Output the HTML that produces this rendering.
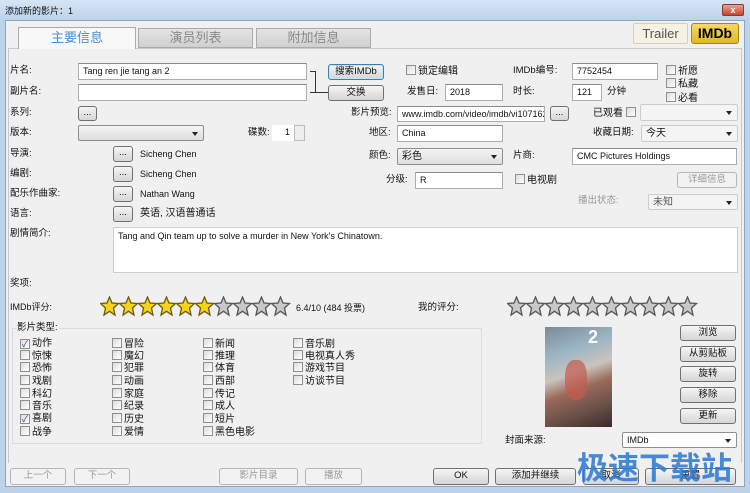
<!DOCTYPE html>
<html><head><meta charset="utf-8"><style>
*{box-sizing:border-box;margin:0;padding:0}
body{width:750px;height:493px;overflow:hidden;background:#bcd3ea;font-family:"Liberation Sans","Noto Sans CJK SC",sans-serif;font-size:9.5px;color:#111;position:relative}
.a{position:absolute;white-space:nowrap}
.l{position:absolute;white-space:nowrap;line-height:12px}
.in{position:absolute;background:#fff;border:1px solid #abadb3;border-top-color:#8a8c92;font-size:9px;padding:2px 4px;line-height:11px;white-space:nowrap;overflow:hidden}
.bt{position:absolute;border:1px solid #707070;border-radius:3px;background:linear-gradient(#f6f6f6,#e4e4e4 50%,#d6d6d6);text-align:center;font-size:9.5px;line-height:14px}
.bt.d{color:#999;border-color:#b5b5b5;background:#f2f2f2}
.dd{position:absolute;border:1px solid #8e8f8f;border-radius:2px;background:linear-gradient(#f4f4f4,#dedede);font-size:10px;padding:1px 4px;line-height:13px}
.dd:after{content:"";position:absolute;right:5px;top:6px;border:3px solid transparent;border-top:4px solid #222}
.ck{position:absolute;font-size:10px;line-height:12px;white-space:nowrap}
.ck i{display:inline-block;width:10px;height:10px;border:1px solid #8f8f8f;background:linear-gradient(135deg,#dcdcdc,#fff);vertical-align:-1px;margin-right:2px;font-style:normal;font-size:9px;line-height:8px;color:#2a4a9a;text-align:center}
</style></head><body>
<div class="a" style="left:0;top:0;width:750px;height:20px;background:linear-gradient(#d5e5f5,#bcd3ea)"></div>
<div class="a" style="left:5px;top:4px;font-size:9px">添加新的影片：1</div>
<div class="a" style="left:722px;top:4px;width:22px;height:12px;background:linear-gradient(#e8a393,#c7452e);border:1px solid #8a3a2a;border-radius:2px;color:#fff;font-size:9px;text-align:center;line-height:10px;font-weight:bold">x</div>
<div class="a" style="left:5px;top:20px;width:740px;height:467px;background:#f0f0f0;border:1px solid #8da6c0"></div>
<div class="a" style="left:8px;top:48px;width:734px;height:415px;border:1px solid #c8c8c8;border-bottom:none"></div>
<div class="a" style="left:18px;top:27px;width:118px;height:22px;background:#f8f8f8;border:1px solid #aaa;border-bottom:none;color:#4a8ed0;font-size:13px;text-align:center;line-height:20px">主要信息</div>
<div class="a" style="left:138px;top:28px;width:115px;height:20px;background:linear-gradient(#e4e4e4,#d0d0d0);border:1px solid #aaa;color:#888;font-size:13px;text-align:center;line-height:18px">演员列表</div>
<div class="a" style="left:256px;top:28px;width:115px;height:20px;background:linear-gradient(#e4e4e4,#d0d0d0);border:1px solid #aaa;color:#888;font-size:13px;text-align:center;line-height:18px">附加信息</div>
<div class="a" style="left:633px;top:23px;width:55px;height:21px;background:#f6f1e2;border:1px solid #d9cfb0;border-radius:2px;font-size:13px;color:#555;text-align:center;line-height:19px">Trailer</div>
<div class="a" style="left:691px;top:23px;width:48px;height:21px;background:linear-gradient(#f5d86a,#e0b820);border:1px solid #a88810;border-radius:3px;font-size:14px;font-weight:bold;text-align:center;line-height:19px;color:#000">IMDb</div>
<div class="l" style="left:10px;top:65px">片名:</div>
<div class="in" style="left:78px;top:63px;width:229px;height:17px">Tang ren jie tang an 2</div>
<div class="l" style="left:10px;top:86px">副片名:</div>
<div class="in" style="left:78px;top:84px;width:229px;height:17px"></div>
<div class="a" style="left:310px;top:71px;width:6px;height:22px;border:1px solid #333;border-left:none"></div>
<div class="a" style="left:316px;top:92px;width:12px;height:1px;background:#333"></div>
<div class="bt" style="left:328px;top:64px;width:56px;height:16px;border-color:#3c7fb1;box-shadow:inset 0 0 0 1px #bfe3f8">搜索IMDb</div>
<div class="bt" style="left:328px;top:85px;width:56px;height:16px">交换</div>
<div class="ck" style="left:406px;top:65px"><i></i>锁定编辑</div>
<div class="l" style="left:407px;top:86px">发售日:</div>
<div class="in" style="left:445px;top:84px;width:58px;height:17px">2018</div>
<div class="l" style="left:513px;top:65px">IMDb编号:</div>
<div class="in" style="left:572px;top:63px;width:86px;height:17px">7752454</div>
<div class="l" style="left:513px;top:86px">时长:</div>
<div class="in" style="left:572px;top:84px;width:30px;height:17px">121</div>
<div class="l" style="left:607px;top:86px">分钟</div>
<div class="ck" style="left:666px;top:65px"><i></i>祈愿</div>
<div class="ck" style="left:666px;top:78px"><i></i>私藏</div>
<div class="ck" style="left:666px;top:92px"><i></i>必看</div>
<div class="l" style="left:10px;top:107px">系列:</div>
<div class="bt" style="left:78px;top:106px;width:19px;height:15px;line-height:11px">...</div>
<div class="l" style="left:351px;top:107px">影片预览:</div>
<div class="in" style="left:397px;top:106px;width:148px;height:16px">www.imdb.com/video/imdb/vi1071626:</div>
<div class="bt" style="left:550px;top:106px;width:19px;height:15px;line-height:11px">...</div>
<div class="ck" style="left:593px;top:107px">已观看 <i></i></div>
<div class="dd" style="left:640px;top:104px;width:98px;height:17px;background:#f4f4f4;border-color:#ccc"></div>
<div class="l" style="left:10px;top:127px">版本:</div>
<div class="dd" style="left:78px;top:125px;width:126px;height:16px"></div>
<div class="l" style="left:248px;top:127px">碟数:</div>
<div class="in" style="left:272px;top:125px;width:22px;height:16px;border:none;text-align:right">1</div>
<div class="a" style="left:294px;top:125px;width:11px;height:16px;border:1px solid #bbb;background:#eee"></div>
<div class="l" style="left:369px;top:127px">地区:</div>
<div class="in" style="left:397px;top:125px;width:106px;height:17px">China</div>
<div class="l" style="left:593px;top:127px">收藏日期:</div>
<div class="dd" style="left:641px;top:125px;width:97px;height:17px;background:#f4f4f4;border-color:#ccc">今天</div>
<div class="l" style="left:10px;top:148px">导演:</div>
<div class="bt" style="left:113px;top:146px;width:20px;height:16px;line-height:12px">...</div>
<div class="l" style="left:140px;top:148px;font-size:9px">Sicheng Chen</div>
<div class="l" style="left:369px;top:150px">颜色:</div>
<div class="dd" style="left:397px;top:148px;width:106px;height:17px">彩色</div>
<div class="l" style="left:513px;top:150px">片商:</div>
<div class="in" style="left:572px;top:148px;width:165px;height:17px">CMC Pictures Holdings</div>
<div class="l" style="left:10px;top:168px">编剧:</div>
<div class="bt" style="left:113px;top:166px;width:20px;height:16px;line-height:12px">...</div>
<div class="l" style="left:140px;top:168px;font-size:9px">Sicheng Chen</div>
<div class="l" style="left:386px;top:174px">分级:</div>
<div class="in" style="left:415px;top:172px;width:88px;height:17px">R</div>
<div class="ck" style="left:515px;top:174px"><i></i>电视剧</div>
<div class="bt d" style="left:677px;top:172px;width:60px;height:16px">详细信息</div>
<div class="l" style="left:10px;top:188px">配乐作曲家:</div>
<div class="bt" style="left:113px;top:186px;width:20px;height:16px;line-height:12px">...</div>
<div class="l" style="left:140px;top:188px;font-size:9px">Nathan Wang</div>
<div class="l" style="left:578px;top:195px;color:#999">播出状态:</div>
<div class="dd" style="left:648px;top:194px;width:90px;height:16px;background:#f4f4f4;border-color:#ccc;color:#555">未知</div>
<div class="l" style="left:10px;top:208px">语言:</div>
<div class="bt" style="left:113px;top:206px;width:20px;height:16px;line-height:12px">...</div>
<div class="l" style="left:140px;top:208px;font-size:10px">英语, 汉语普通话</div>
<div class="l" style="left:10px;top:228px">剧情简介:</div>
<div class="in" style="left:113px;top:227px;width:625px;height:46px;border-color:#ccc;padding:3px 4px">Tang and Qin team up to solve a murder in New York's Chinatown.</div>
<div class="l" style="left:10px;top:278px">奖项:</div>
<div class="l" style="left:10px;top:301px;font-size:9px">IMDb评分:</div>
<svg class="a" style="left:100px;top:296px" width="195" height="21">
<defs><polygon id="s" points="9.5,1 12,7 18.5,7.5 13.5,12 15,19 9.5,15.3 4,19 5.5,12 0.5,7.5 7,7" /></defs>
<g stroke="#6b5a10" stroke-width="1.3">
<use href="#s" x="0" fill="#f5d21c"/><use href="#s" x="19" fill="#f5d21c"/><use href="#s" x="38" fill="#f5d21c"/><use href="#s" x="57" fill="#f5d21c"/><use href="#s" x="76" fill="#f5d21c"/><use href="#s" x="95" fill="#f5d21c"/><use href="#s" x="114" fill="#c8c8c8" stroke="#555"/><use href="#s" x="133" fill="#c8c8c8" stroke="#555"/><use href="#s" x="152" fill="#c8c8c8" stroke="#555"/><use href="#s" x="171" fill="#c8c8c8" stroke="#555"/></g></svg>
<div class="l" style="left:296px;top:302px;font-size:9px">6.4/10 (484 投票)</div>
<div class="l" style="left:418px;top:302px">我的评分:</div>
<svg class="a" style="left:507px;top:296px" width="195" height="21"><g fill="#c8c8c8" stroke="#555" stroke-width="1.3">
<use href="#s" x="0"/><use href="#s" x="19"/><use href="#s" x="38"/><use href="#s" x="57"/><use href="#s" x="76"/><use href="#s" x="95"/><use href="#s" x="114"/><use href="#s" x="133"/><use href="#s" x="152"/><use href="#s" x="171"/></g></svg>
<div class="a" style="left:12px;top:328px;width:470px;height:116px;border:1px solid #dcdcdc"></div>
<div class="l" style="left:16px;top:322px;background:#f0f0f0;padding:0 1px">影片类型:</div>
<div class="ck" style="left:20px;top:338px"><i>✓</i>动作</div>
<div class="ck" style="left:20px;top:350px"><i></i>惊悚</div>
<div class="ck" style="left:20px;top:362px"><i></i>恐怖</div>
<div class="ck" style="left:20px;top:375px"><i></i>戏剧</div>
<div class="ck" style="left:20px;top:388px"><i></i>科幻</div>
<div class="ck" style="left:20px;top:400px"><i></i>音乐</div>
<div class="ck" style="left:20px;top:413px"><i>✓</i>喜剧</div>
<div class="ck" style="left:20px;top:426px"><i></i>战争</div>
<div class="ck" style="left:112px;top:338px"><i></i>冒险</div>
<div class="ck" style="left:112px;top:350px"><i></i>魔幻</div>
<div class="ck" style="left:112px;top:362px"><i></i>犯罪</div>
<div class="ck" style="left:112px;top:375px"><i></i>动画</div>
<div class="ck" style="left:112px;top:388px"><i></i>家庭</div>
<div class="ck" style="left:112px;top:400px"><i></i>纪录</div>
<div class="ck" style="left:112px;top:413px"><i></i>历史</div>
<div class="ck" style="left:112px;top:426px"><i></i>爱情</div>
<div class="ck" style="left:203px;top:338px"><i></i>新闻</div>
<div class="ck" style="left:203px;top:350px"><i></i>推理</div>
<div class="ck" style="left:203px;top:362px"><i></i>体育</div>
<div class="ck" style="left:203px;top:375px"><i></i>西部</div>
<div class="ck" style="left:203px;top:388px"><i></i>传记</div>
<div class="ck" style="left:203px;top:400px"><i></i>成人</div>
<div class="ck" style="left:203px;top:413px"><i></i>短片</div>
<div class="ck" style="left:203px;top:426px"><i></i>黑色电影</div>
<div class="ck" style="left:293px;top:338px"><i></i>音乐剧</div>
<div class="ck" style="left:293px;top:350px"><i></i>电视真人秀</div>
<div class="ck" style="left:293px;top:362px"><i></i>游戏节目</div>
<div class="ck" style="left:293px;top:375px"><i></i>访谈节目</div>
<div class="a" style="left:545px;top:327px;width:67px;height:100px;background:linear-gradient(160deg,#7a8a96 0%,#9ab4c4 25%,#c9c4bd 45%,#9a6a5a 60%,#6a5048 80%,#3a2a2a 100%)"></div>
<div class="a" style="left:588px;top:328px;color:#fff;font-size:18px;font-weight:bold;line-height:18px">2</div>
<div class="a" style="left:565px;top:360px;width:22px;height:40px;background:#c65a50;opacity:.7;border-radius:40%"></div>
<div class="bt" style="left:680px;top:325px;width:56px;height:16px">浏览</div>
<div class="bt" style="left:680px;top:346px;width:56px;height:16px">从剪贴板</div>
<div class="bt" style="left:680px;top:366px;width:56px;height:16px">旋转</div>
<div class="bt" style="left:680px;top:387px;width:56px;height:16px">移除</div>
<div class="bt" style="left:680px;top:408px;width:56px;height:16px">更新</div>
<div class="l" style="left:505px;top:435px">封面来源:</div>
<div class="dd" style="left:622px;top:432px;width:115px;height:16px;background:#fff;font-size:9px">IMDb</div>
<div class="bt d" style="left:10px;top:468px;width:56px;height:17px">上一个</div>
<div class="bt d" style="left:74px;top:468px;width:56px;height:17px">下一个</div>
<div class="bt d" style="left:219px;top:468px;width:79px;height:17px">影片目录</div>
<div class="bt d" style="left:305px;top:468px;width:57px;height:17px">播放</div>
<div class="bt" style="left:433px;top:468px;width:56px;height:17px">OK</div>
<div class="bt" style="left:495px;top:468px;width:81px;height:17px">添加并继续</div>
<div class="bt" style="left:583px;top:468px;width:56px;height:17px">取消</div>
<div class="bt" style="left:645px;top:468px;width:91px;height:17px">重置</div>
<div class="a" style="left:577px;top:447px;font-size:31px;font-weight:bold;color:rgba(40,120,210,.85);line-height:38px;font-family:'Noto Sans CJK SC',sans-serif">极速下载站</div>
</body></html>
